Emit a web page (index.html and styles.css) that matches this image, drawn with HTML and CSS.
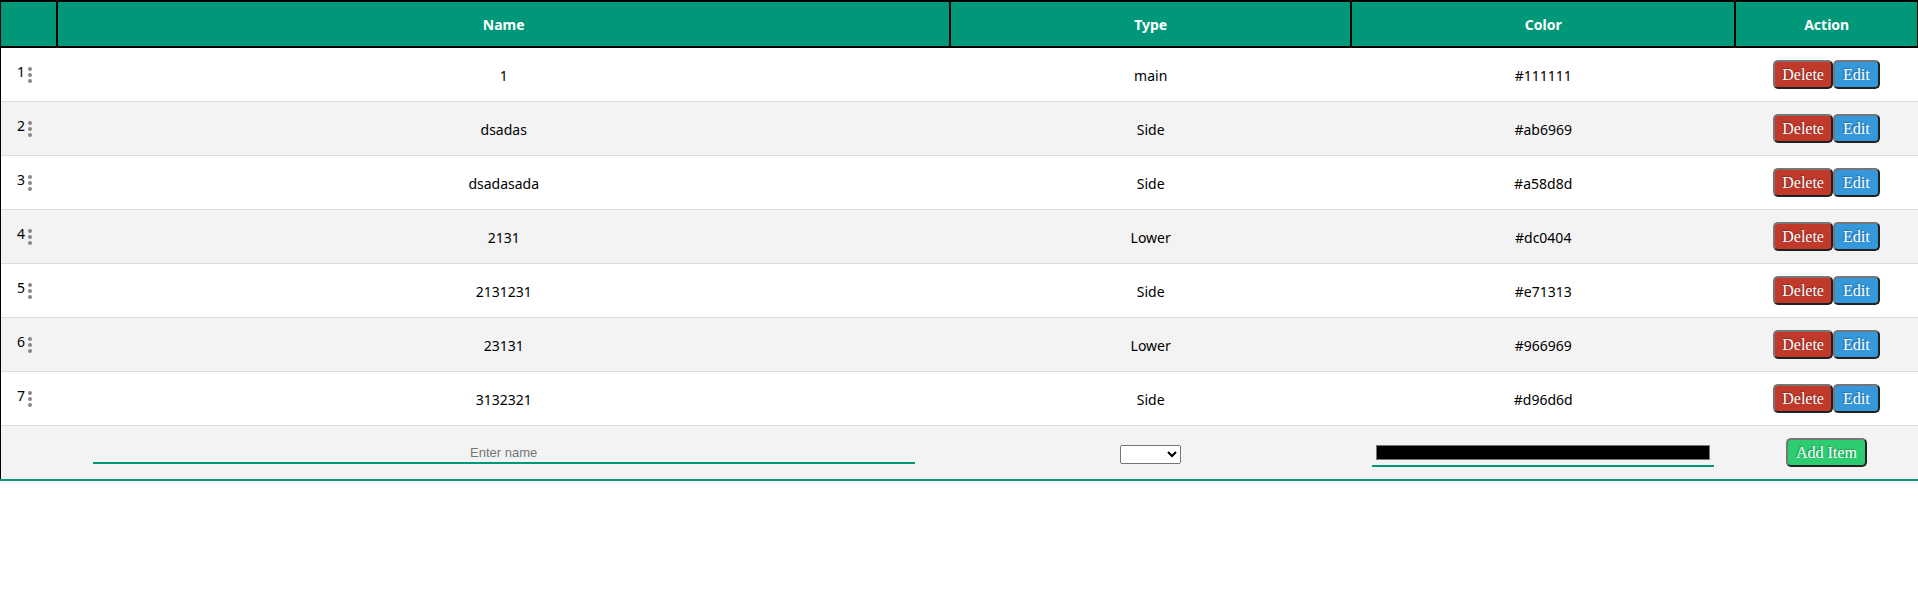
FILE: index.html
```html
<!DOCTYPE html>
<html lang="en">
<head>
<meta charset="utf-8">
<title>Items</title>
<link rel="stylesheet" href="styles.css">
</head>
<body>
<table class="items">
<colgroup><col class="col-order"><col class="col-name"><col class="col-type"><col class="col-color"><col class="col-action"></colgroup>
<thead>
<tr><th></th><th>Name</th><th>Type</th><th>Color</th><th>Action</th></tr>
</thead>
<tbody>
<tr><td><div class="order"><span>1</span><svg class="grip" viewBox="0 0 4 16"><circle cx="2" cy="2" r="2"/><circle cx="2" cy="8" r="2"/><circle cx="2" cy="14" r="2"/></svg></div></td><td>1</td><td>main</td><td>#111111</td><td><div class="actions"><button class="btn delete">Delete</button><button class="btn edit">Edit</button></div></td></tr>
<tr><td><div class="order"><span>2</span><svg class="grip" viewBox="0 0 4 16"><circle cx="2" cy="2" r="2"/><circle cx="2" cy="8" r="2"/><circle cx="2" cy="14" r="2"/></svg></div></td><td>dsadas</td><td>Side</td><td>#ab6969</td><td><div class="actions"><button class="btn delete">Delete</button><button class="btn edit">Edit</button></div></td></tr>
<tr><td><div class="order"><span>3</span><svg class="grip" viewBox="0 0 4 16"><circle cx="2" cy="2" r="2"/><circle cx="2" cy="8" r="2"/><circle cx="2" cy="14" r="2"/></svg></div></td><td>dsadasada</td><td>Side</td><td>#a58d8d</td><td><div class="actions"><button class="btn delete">Delete</button><button class="btn edit">Edit</button></div></td></tr>
<tr><td><div class="order"><span>4</span><svg class="grip" viewBox="0 0 4 16"><circle cx="2" cy="2" r="2"/><circle cx="2" cy="8" r="2"/><circle cx="2" cy="14" r="2"/></svg></div></td><td>2131</td><td>Lower</td><td>#dc0404</td><td><div class="actions"><button class="btn delete">Delete</button><button class="btn edit">Edit</button></div></td></tr>
<tr><td><div class="order"><span>5</span><svg class="grip" viewBox="0 0 4 16"><circle cx="2" cy="2" r="2"/><circle cx="2" cy="8" r="2"/><circle cx="2" cy="14" r="2"/></svg></div></td><td>2131231</td><td>Side</td><td>#e71313</td><td><div class="actions"><button class="btn delete">Delete</button><button class="btn edit">Edit</button></div></td></tr>
<tr><td><div class="order"><span>6</span><svg class="grip" viewBox="0 0 4 16"><circle cx="2" cy="2" r="2"/><circle cx="2" cy="8" r="2"/><circle cx="2" cy="14" r="2"/></svg></div></td><td>23131</td><td>Lower</td><td>#966969</td><td><div class="actions"><button class="btn delete">Delete</button><button class="btn edit">Edit</button></div></td></tr>
<tr><td><div class="order"><span>7</span><svg class="grip" viewBox="0 0 4 16"><circle cx="2" cy="2" r="2"/><circle cx="2" cy="8" r="2"/><circle cx="2" cy="14" r="2"/></svg></div></td><td>3132321</td><td>Side</td><td>#d96d6d</td><td><div class="actions"><button class="btn delete">Delete</button><button class="btn edit">Edit</button></div></td></tr>
<tr><td></td><td><input class="field name" type="text" placeholder="Enter name" aria-label="Name"></td><td><select class="type" aria-label="Type"><option></option><option>main</option><option>Side</option><option>Lower</option></select></td><td><input class="field color" type="color" value="#000000" aria-label="Color"></td><td><div class="actions"><button class="btn add">Add Item</button></div></td></tr>
</tbody>
</table>
</body>
</html>
```
FILE: styles.css
```css
body {
  margin: 0;
  background: #fff;
}

.items {
  width: 100%;
  table-layout: fixed;
  border-collapse: collapse;
  font: 14px/20px "Segoe UI", "Noto Sans", sans-serif;
  color: #000;
  text-align: center;
}

.col-order { width: 2.95%; }
.col-name { width: 46.6%; }
.col-type { width: 20.9%; }
.col-color { width: 20.05%; }
.col-action { width: 9.5%; }

th {
  height: 42px;
  padding: 2px 0 0;
  border: 2px solid #000;
  background: #009879;
  color: #fff;
  font-weight: 700;
}

th:first-child {
  border-left-width: 1px;
}

th:last-child {
  border-right-width: 1px;
}

td {
  height: 51px;
  padding: 2px 0 0;
}

tbody tr {
  border-bottom: 1px solid #ddd;
}

tbody td:first-child {
  border-left: 1px solid #000;
}

tbody tr:nth-child(even) {
  background: #f3f3f3;
}

tbody tr:last-child {
  border-bottom: 2px solid #009879;
}

.order {
  display: flex;
  align-items: center;
  gap: 3px;
  padding: 0 0 2px 16px;
}

.order span {
  padding-bottom: 6px;
}

.grip {
  width: 4px;
  height: 16px;
  fill: #888;
}

.actions {
  display: flex;
  justify-content: center;
  padding-bottom: 2px;
}

.btn {
  padding: 3px 8px;
  border: 2px solid;
  border-color: #767676 #212121 #212121 #767676;
  border-radius: 5px;
  color: #fff;
  font: 16px/19px "Liberation Serif", serif;
  text-shadow: -1px -1px 1px rgba(0, 0, 0, 0.3);
}

.delete {
  padding: 3px 7px;
  background: #c0392b;
}

.edit { background: #3498db; }
.add { background: #2ecc71; }

.field {
  box-sizing: border-box;
  border: 0;
  border-bottom: 2px solid #009879;
  background: none;
  vertical-align: middle;
}

.name {
  width: 92%;
  height: 21px;
  padding: 1px 2px;
  font: 13px/15px "Liberation Sans", sans-serif;
  text-align: center;
}

.color {
  width: 89%;
  height: 27px;
  padding: 1px 2px;
}

.type {
  width: 61px;
  height: 19px;
  font: 13px/15px "Liberation Sans", sans-serif;
  vertical-align: middle;
}
```
